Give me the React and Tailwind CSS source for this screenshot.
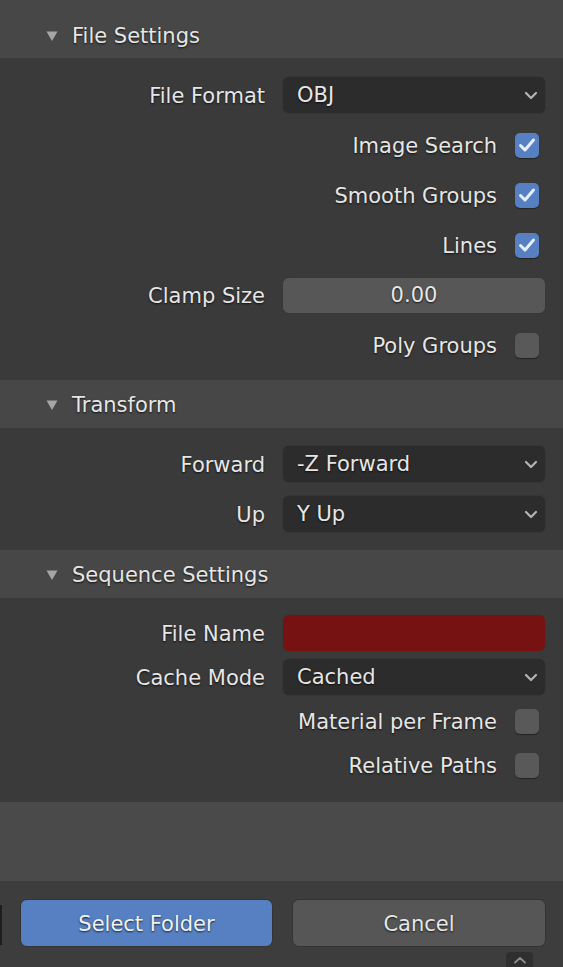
import React from "react";

const shadow = "[text-shadow:0_1px_2px_rgba(0,0,0,0.75)]";

function Chevron() {
  return (
    <svg width="14" height="9" viewBox="0 0 14 9" className="shrink-0">
      <polyline
        points="2,2 7,7 12,2"
        fill="none"
        stroke="#b4b4b4"
        strokeWidth="2.2"
        strokeLinecap="round"
        strokeLinejoin="round"
      />
    </svg>
  );
}

function Header({ title, first }) {
  return (
    <div
      className={`flex items-center bg-[#474747] ${first ? "h-[58px] pt-[11px]" : "h-[48px]"}`}
    >
      <div className="w-[72px] pl-[46px]">
        <svg width="12" height="10" viewBox="0 0 12 10" className="translate-y-[1px]">
          <polygon points="0.5,0.5 11.5,0.5 6,10" fill="#a6a6a6" />
        </svg>
      </div>
      <span className={`translate-y-[2px] ${shadow}`}>{title}</span>
    </div>
  );
}

function FieldRow({ label, h, children }) {
  return (
    <div className={`flex items-center ${h}`}>
      <div className={`w-[265px] text-right translate-y-[2px] ${shadow}`}>{label}</div>
      <div className="ml-[17px] w-[264px]">{children}</div>
    </div>
  );
}

function Dropdown({ value }) {
  return (
    <div className="h-[38px] rounded-[7px] bg-[#2c2c2c] border border-[#363636] flex items-center justify-between pl-[14px] pr-[7px]">
      <span className={`translate-y-[1px] ${shadow}`}>{value}</span>
      <Chevron />
    </div>
  );
}

function CheckRow({ label, checked, h }) {
  return (
    <div className={`flex items-center justify-end pr-[24px] ${h}`}>
      <span className={`mr-[18px] translate-y-[2px] ${shadow}`}>{label}</span>
      <div
        className={`w-[24px] h-[25px] rounded-[5px] flex items-center justify-center shadow-[0_1px_1px_rgba(0,0,0,0.4)] ${checked ? "bg-[#5680c2]" : "bg-[#595959]"}`}
      >
        {checked && (
          <svg width="18" height="16" viewBox="0 0 18 16">
            <polyline
              points="2.5,8.5 7,13 15.5,3"
              fill="none"
              stroke="#e8eef8"
              strokeWidth="3"
              strokeLinecap="round"
              strokeLinejoin="round"
            />
          </svg>
        )}
      </div>
    </div>
  );
}

export default function App() {
  return (
    <div className="relative w-[563px] h-[967px] overflow-hidden bg-[#3d3d3d] flex flex-col font-['DejaVu_Sans',sans-serif] text-[21px] text-[#e6e6e6]">
      <Header title="File Settings" first />
      <div className="bg-[#3a3a3a] pt-[12px] pb-[10px]">
        <FieldRow label="File Format" h="h-[50px]">
          <Dropdown value="OBJ" />
        </FieldRow>
        <CheckRow label="Image Search" checked h="h-[50px]" />
        <CheckRow label="Smooth Groups" checked h="h-[50px]" />
        <CheckRow label="Lines" checked h="h-[50px]" />
        <FieldRow label="Clamp Size" h="h-[50px]">
          <div className={`h-[37px] rounded-[7px] bg-[#575757] border border-[#383838] flex items-center justify-center ${shadow}`}>
            <span className="translate-y-[1px]">0.00</span>
          </div>
        </FieldRow>
        <CheckRow label="Poly Groups" h="h-[50px]" />
      </div>

      <Header title="Transform" />
      <div className="bg-[#3a3a3a] pt-[11px] pb-[11px]">
        <FieldRow label="Forward" h="h-[50px]">
          <Dropdown value="-Z Forward" />
        </FieldRow>
        <FieldRow label="Up" h="h-[50px]">
          <Dropdown value="Y Up" />
        </FieldRow>
      </div>

      <Header title="Sequence Settings" />
      <div className="bg-[#3a3a3a] pt-[13px] pb-[15px]">
        <FieldRow label="File Name" h="h-[44px]">
          <div className="h-[38px] rounded-[7px] bg-[#771212] border border-[#383838]" />
        </FieldRow>
        <FieldRow label="Cache Mode" h="h-[44px]">
          <Dropdown value="Cached" />
        </FieldRow>
        <CheckRow label="Material per Frame" h="h-[44px]" />
        <CheckRow label="Relative Paths" h="h-[44px]" />
      </div>

      <div className="h-[79px] bg-[#4a4a4a]" />

      <div className="flex-1 flex gap-[19px] pl-[20px] pt-[18px]">
        <button className={`shrink-0 w-[253px] h-[48px] rounded-[7px] bg-[#5680c2] border border-[#333] text-[#f2f2f2] ${shadow}`}>
          <span className="inline-block translate-y-[2px]">Select Folder</span>
        </button>
        <button className={`shrink-0 w-[254px] h-[48px] rounded-[7px] bg-[#565656] border border-[#333] text-[#e6e6e6] ${shadow}`}>
          <span className="inline-block translate-y-[2px]">Cancel</span>
        </button>
      </div>

      <div className="absolute left-0 top-[905px] w-[2px] h-[40px] bg-[#1e1e1e]" />
      <div className="absolute left-[506px] top-[952px] w-[27px] h-[15px] rounded-t-[4px] bg-[#2f2f2f] flex items-center justify-center">
        <svg width="14" height="8" viewBox="0 0 14 8">
          <polyline points="2,6.5 7,2 12,6.5" fill="none" stroke="#8a8a8a" strokeWidth="2" strokeLinecap="round" strokeLinejoin="round" />
        </svg>
      </div>
    </div>
  );
}
